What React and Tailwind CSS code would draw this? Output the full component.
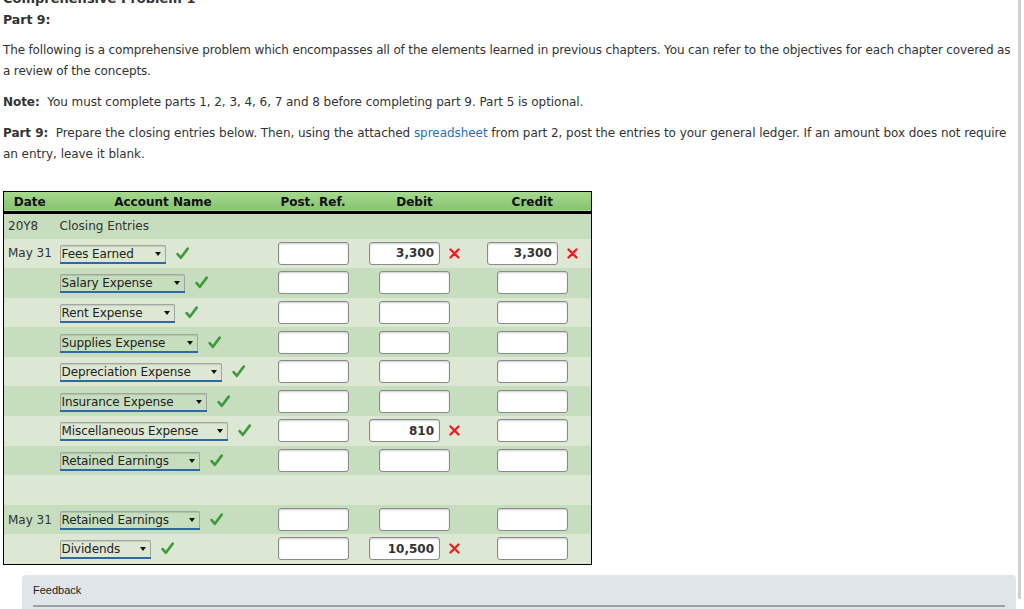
const rows = [
  { date: 'May 31', account: 'Fees Earned', w: 106, debit: '3,300', debitX: true, credit: '3,300', creditX: true, dark: false },
  { account: 'Salary Expense', w: 125, dark: true },
  { account: 'Rent Expense', w: 115, dark: false },
  { account: 'Supplies Expense', w: 138, dark: true },
  { account: 'Depreciation Expense', w: 162, dark: false },
  { account: 'Insurance Expense', w: 147, dark: true },
  { account: 'Miscellaneous Expense', w: 168, debit: '810', debitX: true, dark: false },
  { account: 'Retained Earnings', w: 140, dark: true },
  { blank: true, dark: false },
  { date: 'May 31', account: 'Retained Earnings', w: 140, dark: true },
  { account: 'Dividends', w: 91, debit: '10,500', debitX: true, dark: false },
];

function Check() {
  return (
    <svg width="13" height="13" viewBox="0 0 12 12" className="shrink-0">
      <path d="M1.5 6.5 L4.5 10 L10.8 1.5" fill="none" stroke="#3d9a3d" strokeWidth="2.4" strokeLinecap="round" strokeLinejoin="round" />
    </svg>
  );
}

function Cross() {
  return (
    <svg width="11" height="11" viewBox="0 0 11 11" className="shrink-0">
      <path d="M1.5 1.5 L9.5 9.5 M9.5 1.5 L1.5 9.5" stroke="#ee1c25" strokeWidth="2.4" strokeLinecap="round" />
    </svg>
  );
}

function Select({ label, w }) {
  return (
    <div className="flex items-center gap-[10px]">
      <div
        className="relative flex h-[17px] items-center rounded-t-[2px] border border-b-0 border-[#a5a5a5] pl-[1px] shadow-[inset_0_1px_1px_rgba(0,0,0,0.12)]"
        style={{ width: w }}
      >
        <span className="text-[12px] leading-none tracking-[-0.1px] text-[#222]">{label}</span>
        <span className="absolute right-[4px] top-[6px] h-0 w-0 border-x-[3px] border-t-[4px] border-x-transparent border-t-[#111]" />
        <span className="absolute -bottom-[2px] -left-[1px] -right-[1px] h-[2px] bg-[#2d6aa3]" />
      </div>
      <Check />
    </div>
  );
}

function Amount({ value, x }) {
  if (!value) {
    return (
      <div className="flex justify-center">
        <div className="h-[23px] w-[71px] rounded-[3px] border border-[#8a8a8a] bg-white shadow-[inset_0_1px_2px_rgba(0,0,0,0.2)]" />
      </div>
    );
  }
  return (
    <div className="flex items-center justify-center gap-[9px]">
      <div className="flex h-[23px] w-[71px] items-center justify-end rounded-[3px] border border-[#8a8a8a] bg-white pr-[5px] text-[12px] font-bold text-[#333] shadow-[inset_0_1px_2px_rgba(0,0,0,0.2)]">
        {value}
      </div>
      {x && <Cross />}
    </div>
  );
}

export default function App() {
  return (
    <div className="h-[609px] w-[1024px] overflow-hidden bg-white font-['DejaVu_Sans',Verdana,sans-serif] text-[12px] text-[#333]">
      <div className="mr-[3px] h-full border-r-[3px] border-[#cfcfcf] pl-[3px]">
        <div className="-mt-[10px] text-[13px] font-bold leading-[18px]">Comprehensive Problem 1</div>
        <div className="mt-[3px] text-[12.5px] font-bold leading-[18px]">Part 9:</div>

        <p className="mt-[11px] leading-[21px] tracking-[-0.15px]">
          The following is a comprehensive problem which encompasses all of the elements learned in previous chapters. You can refer to the objectives for each chapter covered as a review of the concepts.
        </p>
        <p className="mt-[10px] leading-[21px] tracking-[-0.05px]">
          <b>Note:</b>&nbsp; You must complete parts 1, 2, 3, 4, 6, 7 and 8 before completing part 9. Part 5 is optional.
        </p>
        <p className="mt-[10px] leading-[21px] tracking-[-0.05px]">
          <b>Part 9:</b>&nbsp; Prepare the closing entries below. Then, using the attached <span className="text-[#1f6fc5]">spreadsheet</span> from part 2, post the entries to your general ledger. If an amount box does not require an entry, leave it blank.
        </p>

        <table className="mt-[26px] w-[588px] table-fixed border-collapse border border-black">
          <colgroup>
            <col className="w-[52px]" />
            <col className="w-[215px]" />
            <col className="w-[85px]" />
            <col className="w-[118px]" />
            <col className="w-[118px]" />
          </colgroup>
          <thead>
            <tr className="h-[21px] border-b-[3px] border-black bg-gradient-to-b from-[#a6d98f] to-[#86c46e] text-[12px] font-bold text-[#111]">
              <th className="text-center font-bold">Date</th>
              <th className="text-center font-bold">Account Name</th>
              <th className="text-center font-bold">Post. Ref.</th>
              <th className="text-center font-bold">Debit</th>
              <th className="text-center font-bold">Credit</th>
            </tr>
          </thead>
          <tbody className="text-[12px]">
            <tr className="h-[26px] bg-[#c6ddbe]">
              <td className="pl-[4px] whitespace-nowrap">20Y8</td>
              <td className="pl-[4px]">Closing Entries</td>
              <td />
              <td />
              <td />
            </tr>
            {rows.map((r, i) => (
              <tr key={i} className={`h-[29.6px] ${r.dark ? 'bg-[#c6ddbe]' : 'bg-[#dde8d4]'}`}>
                <td className="pl-[4px] whitespace-nowrap">{r.date || ''}</td>
                <td className="pl-[4px]">{!r.blank && <Select label={r.account} w={r.w} />}</td>
                <td>{!r.blank && <Amount />}</td>
                <td>{!r.blank && <Amount value={r.debit} x={r.debitX} />}</td>
                <td>{!r.blank && <Amount value={r.credit} x={r.creditX} />}</td>
              </tr>
            ))}
          </tbody>
        </table>

        <div className="mt-[10px] ml-[19px] mr-[2px] rounded-[4px] bg-[#dfe5e9] px-[11px] pt-[8px]">
          <div className="font-['Liberation_Sans',Arial,sans-serif] text-[11px] leading-[14px] text-[#222]">Feedback</div>
          <div className="mt-[8px] h-[2px] bg-[#9aa0a3]" />
          <div className="h-[20px]" />
        </div>
      </div>
    </div>
  );
}
